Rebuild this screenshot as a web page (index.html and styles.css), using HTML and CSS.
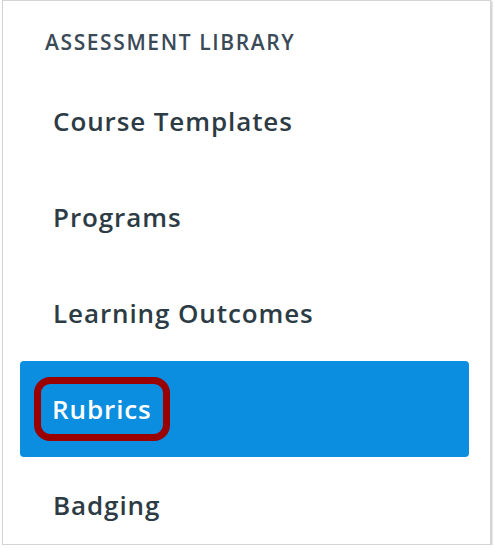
FILE: index.html
```html
<!DOCTYPE html>
<html lang="en">
<head>
    <meta charset="UTF-8">
    <title>Assessment Library</title>
    <link rel="stylesheet" href="styles.css">
</head>
<body>
    <div class="panel">
        <h2 class="section-title">ASSESSMENT LIBRARY</h2>
        <ul class="nav">
            <li class="nav-item"><span class="label">Course Templates</span></li>
            <li class="nav-item"><span class="label">Programs</span></li>
            <li class="nav-item"><span class="label">Learning Outcomes</span></li>
            <li class="nav-item active"><span class="label callout">Rubrics</span></li>
            <li class="nav-item"><span class="label">Badging</span></li>
        </ul>
    </div>
</body>
</html>
```

FILE: styles.css
```css
/* Sidebar panel */
body {
    margin: 0;
    background: #fff;
    font-family: "Open Sans", "Liberation Sans", sans-serif;
}

.panel {
    margin-left: 2px;
    width: 489px;
    height: 545px;
    border: 1px solid #d4d4d4;
    box-shadow: 1px 1px 2px rgba(0, 0, 0, 0.25);
    overflow: hidden;
    padding: 0 21px 0 17px;
    box-sizing: border-box;
}

.section-title {
    margin: 0;
    padding: 27px 0 0 25px;
    height: 72px;
    box-sizing: border-box;
    font-size: 21px;
    line-height: 28px;
    letter-spacing: 1.6px;
    font-weight: 600;
    color: #3b4a57;
}

.nav {
    list-style: none;
    margin: 0;
    padding: 0;
}

.nav-item {
    height: 96px;
    display: flex;
    align-items: center;
    padding-left: 33px;
    border-radius: 4px;
    font-size: 26px;
    line-height: 36px;
    letter-spacing: 0.9px;
    font-weight: 600;
    color: #2d3b45;
}

.nav-item.active {
    background: #0b8de0;
    color: #fff;
}

/* red outline drawn around the active label */
.callout {
    margin-left: -19px;
    padding: 7px 11px;
    border: 7px solid #9b0000;
    border-radius: 16px;
}
```
